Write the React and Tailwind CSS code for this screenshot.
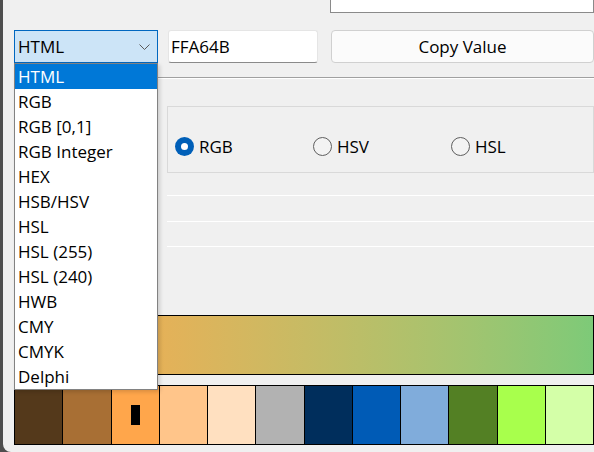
import {useState} from "react";

const formats = ["HTML", "RGB", "RGB [0,1]", "RGB Integer", "HEX", "HSB/HSV", "HSL", "HSL (255)", "HSL (240)", "HWB", "CMY", "CMYK", "Delphi"];

const swatches = ["#54391b", "#a86f34", "#ffa64b", "#ffc58a", "#ffe0c0", "#b2b2b2", "#002e5c", "#005bb6", "#80acdb", "#538024", "#a8ff4c", "#d4ffa8"];

const Radio = ({label, checked}) => (
    <div className="w-[138px] flex items-center gap-[5px]">
        {checked ? (
            <div className="w-[19px] h-[19px] rounded-full bg-[#005fb8] flex items-center justify-center">
                <div className="w-[7px] h-[7px] rounded-full bg-white"/>
            </div>
        ) : (
            <div className="w-[19px] h-[19px] rounded-full border border-[#5f5f5f] bg-[#f3f3f3]"/>
        )}
        <span className="text-[17px] text-black leading-none">{label}</span>
    </div>
);

const App = () => {
    const [format] = useState("HTML");

    return (
        <div className="w-[594px] h-[452px] flex bg-[#4e4e4e] overflow-hidden" style={{fontFamily: '"Open Sans", sans-serif'}}>
            <div className="ml-[3px] flex-1 relative bg-[#f0f0f0] rounded-bl-[8px] flex flex-col pl-[11px]">
                {/* top field, scrolled off */}
                <div className="flex justify-end">
                    <div className="w-[264px] h-[13px] bg-white border-x border-b border-[#8a8a8a]"/>
                </div>

                <div className="mt-[17px] flex items-stretch h-[33px]">
                    <div className="w-[144px] border border-[#0067c0] bg-[#cce4f7] flex items-center justify-between pl-[3px] pr-[7px]">
                        <span className="text-[17px] text-black">{format}</span>
                        <svg width="11" height="6" viewBox="0 0 11 6" fill="none">
                            <path d="M0.5 0.5 L5.5 5.5 L10.5 0.5" stroke="#5a5a5a" strokeWidth="1"/>
                        </svg>
                    </div>
                    <div className="ml-[10px] w-[150px] bg-white border border-[#e5e5e5] border-b-[#8a8a8a] rounded-[3px] flex items-center pl-[2px]">
                        <span className="text-[17px] text-black">FFA64B</span>
                    </div>
                    <button className="ml-[13px] flex-1 bg-[#fbfbfb] border border-[#d0d0d0] rounded-[4px] text-[17px] text-black">
                        Copy Value
                    </button>
                </div>

                <div className="mt-[14px] h-px bg-[#a0a0a0]"/>
                <div className="h-px bg-white"/>

                <div className="mt-[27px] ml-[153px] h-[67px] border border-[#d9d9d9] flex items-center pt-[14px] pl-[7px]">
                    <Radio label="RGB" checked/>
                    <Radio label="HSV"/>
                    <Radio label="HSL"/>
                </div>

                <div className="mt-[22px] ml-[153px] h-px bg-white"/>
                <div className="mt-[25px] ml-[153px] h-px bg-white"/>
                <div className="mt-[24px] ml-[153px] h-px bg-white"/>

                <div className="mt-[68px] h-[60px] border border-black bg-gradient-to-r from-[#ffa64b] to-[#7dca78]"/>

                <div className="mt-[10px] h-[60px] flex border-y border-r border-black">
                    {swatches.map((c, i) => (
                        <div key={c} className="flex-1 border-l border-black flex items-center justify-center" style={{backgroundColor: c}}>
                            {i === 2 && <div className="w-[9px] h-[20px] bg-black"/>}
                        </div>
                    ))}
                </div>

                {/* open dropdown list */}
                <div className="absolute left-[11px] top-[63px] w-[144px] h-[327px] bg-white border border-[#828282] shadow-[2px_2px_4px_rgba(0,0,0,0.15)]">
                    {formats.map((f) => (
                        <div key={f} className={"h-[25px] flex items-center pl-[3px] text-[17px] " + (f === format ? "bg-[#0078d7] text-white" : "text-black")}>
                            {f}
                        </div>
                    ))}
                </div>
            </div>
        </div>
    );
};

export default App;
